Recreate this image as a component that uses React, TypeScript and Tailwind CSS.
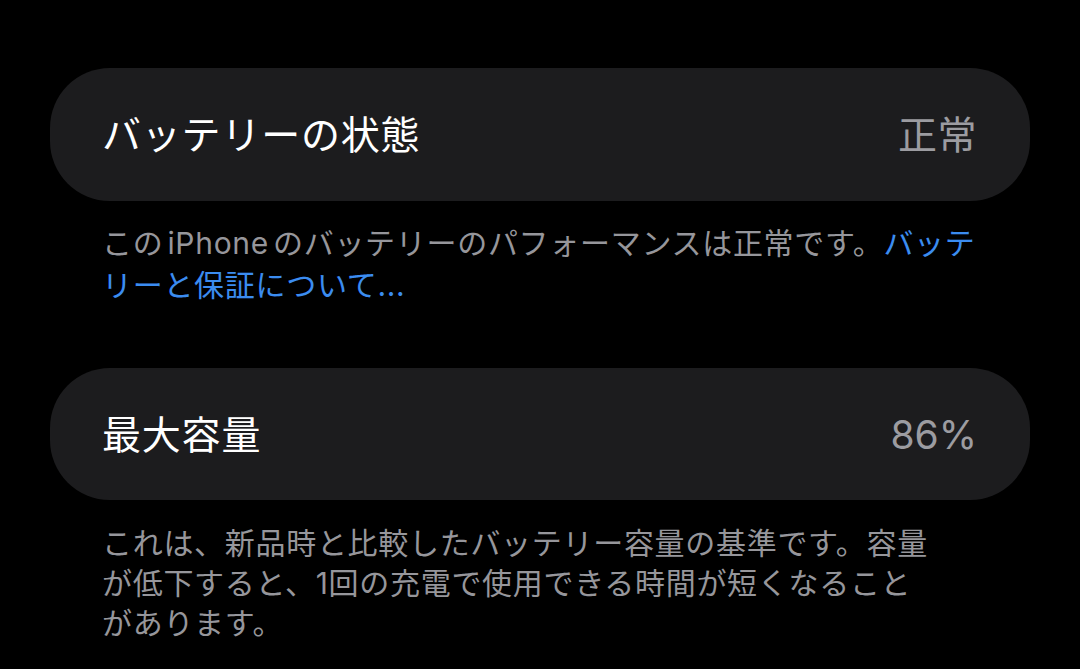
export default function App() {
  const font = { fontFamily: '"Inter", "Noto Sans CJK JP", sans-serif' }

  return (
    <div className="min-h-screen w-full bg-black pl-[50px] pr-[50px] pt-[68px]" style={font}>
      {/* バッテリーの状態 */}
      <div className="flex h-[133px] items-center justify-between rounded-[60px] bg-[#1c1c1e] pl-[52px] pr-[53px]">
        <span className="text-[39px] leading-none tracking-[0.8px] text-white">バッテリーの状態</span>
        <span className="text-[39px] leading-none tracking-[0.5px] text-[#9c9ca1]">正常</span>
      </div>
      <p className="mt-[21px] px-[52px] text-[30px] leading-[42px] tracking-[0.7px] text-[#96969b] whitespace-nowrap">
        この<span className="pl-[4px] pr-[4px]">iPhone</span>のバッテリーのパフォーマンスは正常です。
        <span className="text-[#3b8cf0]">
          バッテ
          <br />
          リーと保証について...
        </span>
      </p>

      {/* 最大容量 */}
      <div className="mt-[62px] flex h-[132px] items-center justify-between rounded-[60px] bg-[#1c1c1e] pl-[52px] pr-[53px]">
        <span className="text-[39px] leading-none tracking-[0.8px] text-white">最大容量</span>
        <span className="text-[39px] leading-none text-[#9c9ca1]">86%</span>
      </div>
      <p className="mt-[23px] px-[52px] text-[30px] leading-[40px] tracking-[0.7px] text-[#96969b] whitespace-nowrap">
        これは、新品時と比較したバッテリー容量の基準です。容量
        <br />
        が低下すると、1回の充電で使用できる時間が短くなること
        <br />
        があります。
      </p>
    </div>
  )
}
